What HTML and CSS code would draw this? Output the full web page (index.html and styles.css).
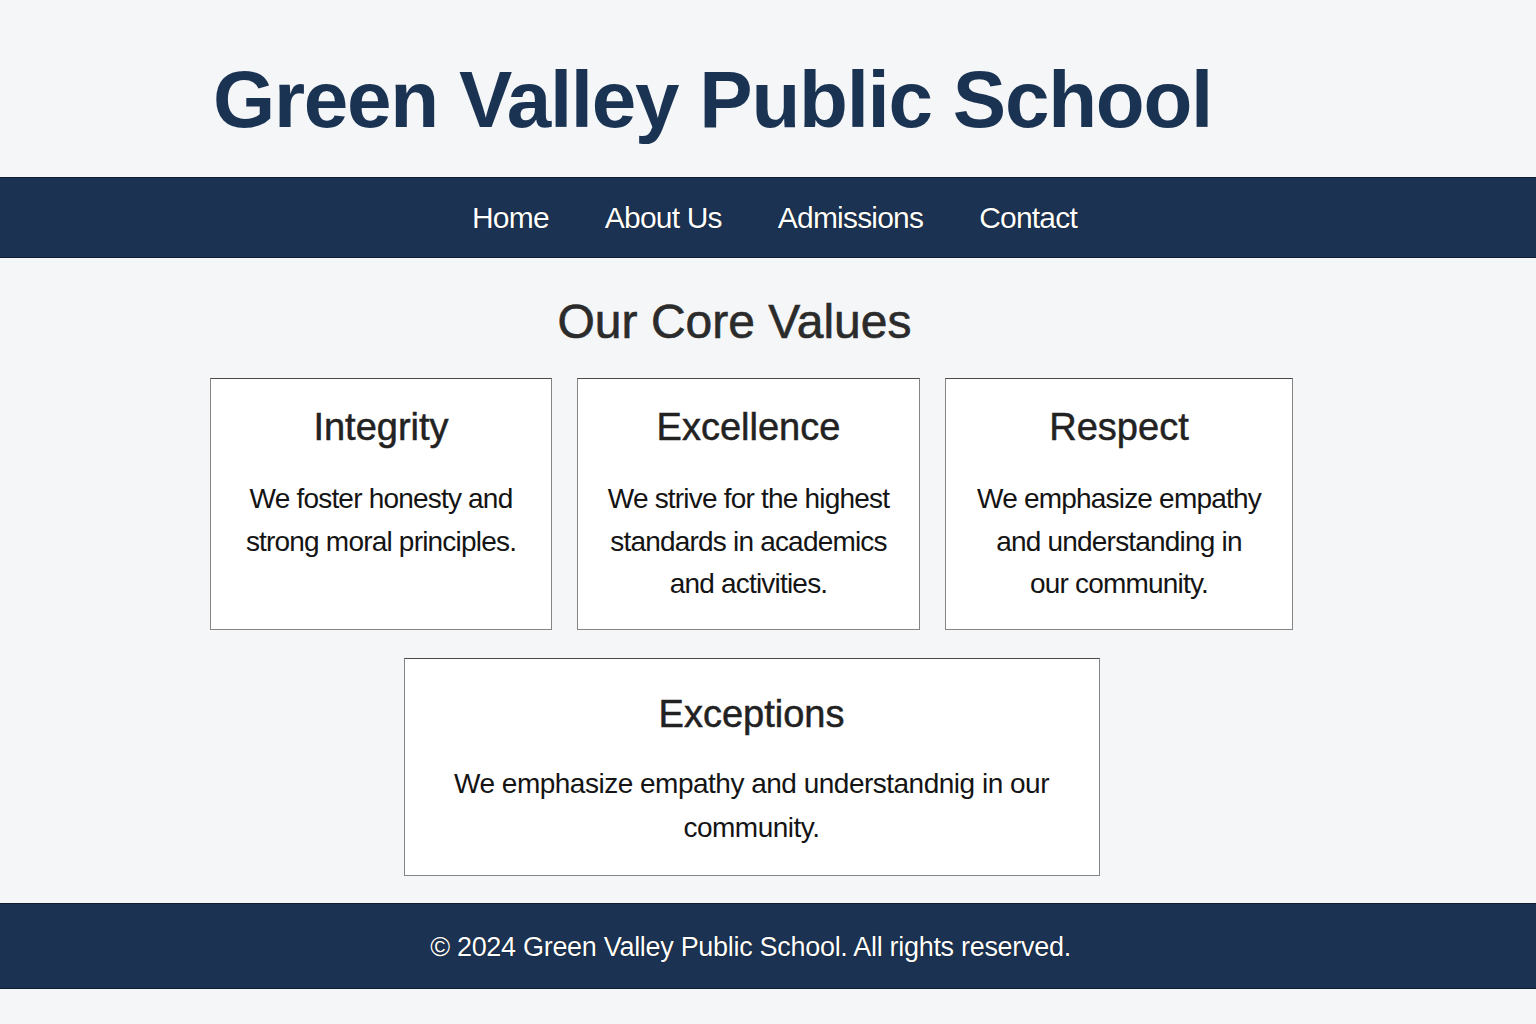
FILE: index.html
```html
<!DOCTYPE html>
<html lang="en">
<head>
<meta charset="utf-8">
<title>Green Valley Public School</title>
<link rel="stylesheet" href="styles.css">
</head>
<body>
  <header class="site-header">
    <h1 class="site-title">Green Valley Public School</h1>
  </header>
  <nav class="main-nav">
    <a class="nav-link" href="#">Home</a>
    <a class="nav-link" href="#">About Us</a>
    <a class="nav-link" href="#">Admissions</a>
    <a class="nav-link" href="#">Contact</a>
  </nav>
  <main class="values">
    <h2 class="values-title">Our Core Values</h2>
    <div class="values-grid">
      <section class="card">
        <h3 class="card-title">Integrity</h3>
        <p class="card-text">We foster honesty and strong moral principles.</p>
      </section>
      <section class="card">
        <h3 class="card-title">Excellence</h3>
        <p class="card-text">We strive for the highest standards in academics and activities.</p>
      </section>
      <section class="card">
        <h3 class="card-title">Respect</h3>
        <p class="card-text">We emphasize empathy and understanding in our community.</p>
      </section>
    </div>
    <section class="card card-wide">
      <h3 class="card-title">Exceptions</h3>
      <p class="card-text">We emphasize empathy and understandnig in our community.</p>
    </section>
  </main>
  <footer class="site-footer">
    <p class="footer-text">&copy; 2024 Green Valley Public School. All rights reserved.</p>
  </footer>
</body>
</html>
```
FILE: styles.css
```css
* { box-sizing: border-box; }

html, body {
  margin: 0;
  padding: 0;
  background: #f5f6f8;
  font-family: "Liberation Sans", Arial, Helvetica, sans-serif;
}

.site-header {
  height: 177px;
  padding: 60px 0 0 213px;
}

.site-title {
  margin: 0;
  font-size: 80px;
  line-height: 80px;
  font-weight: 700;
  letter-spacing: -1.25px;
  color: #1a3353;
}

.main-nav {
  height: 81px;
  background: #1b3253;
  border-top: 1px solid #0f1d31;
  border-bottom: 1px solid #0f1d31;
  display: flex;
  align-items: center;
  justify-content: center;
  gap: 56px;
  padding-left: 13px;
}

.nav-link {
  color: #ffffff;
  text-decoration: none;
  font-size: 30px;
  letter-spacing: -0.8px;
  text-shadow: 0 0 1px #000;
}

.values {
  width: 1083px;
  margin-left: 210px;
  padding-top: 35px;
}

.values-title {
  margin: 0;
  font-size: 48px;
  line-height: 57.6px;
  font-weight: 400;
  -webkit-text-stroke: 0.6px #2b2b2b;
  color: #2b2b2b;
  text-align: center;
  padding-right: 34px;
}

.values-grid {
  margin-top: 27px;
  display: grid;
  grid-template-columns: 342px 343px 348px;
  gap: 25px;
}

.card {
  background: #ffffff;
  border: 1px solid #858585;
  border-top-color: #4a4a4a;
  padding: 26px 29px 23px;
  text-align: center;
}

.card-title {
  margin: 0 0 28px;
  font-size: 38px;
  line-height: 45.6px;
  font-weight: 400;
  -webkit-text-stroke: 0.5px #222;
  color: #222;
}

.card-text {
  margin: 0;
  font-size: 28px;
  line-height: 42.5px;
  letter-spacing: -0.8px;
  color: #141414;
}

.card-wide {
  width: 696px;
  margin: 28px auto 0;
  padding: 33px 30px 25px;
}

.card-wide .card-title {
  margin-bottom: 24.5px;
}

.card-wide .card-text {
  line-height: 44px;
  letter-spacing: -0.5px;
}

.site-footer {
  margin-top: 27px;
  height: 86px;
  background: #1b3253;
  border-top: 1px solid #0f1d31;
  border-bottom: 1px solid #0f1d31;
  display: flex;
  align-items: center;
  justify-content: center;
  padding: 4px 35px 0 0;
}

.footer-text {
  margin: 0;
  color: #ffffff;
  font-size: 27px;
  letter-spacing: -0.3px;
  text-shadow: 0 0 1px #000;
}
```
